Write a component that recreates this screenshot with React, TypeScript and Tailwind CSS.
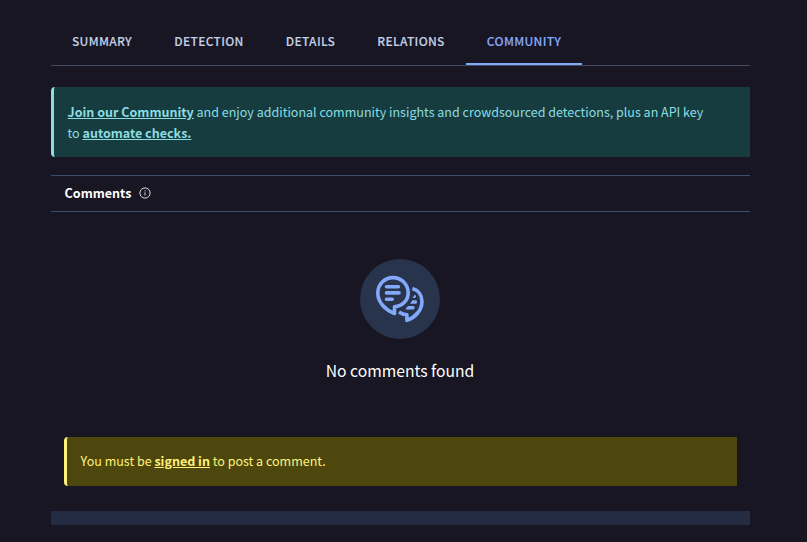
import React from "react";

const tabs = [
  { label: "SUMMARY", width: "w-[102px]" },
  { label: "DETECTION", width: "w-[112px]" },
  { label: "DETAILS", width: "w-[91px]" },
  { label: "RELATIONS", width: "w-[110px]" },
  { label: "COMMUNITY", width: "w-[116px]" },
];

function InfoIcon() {
  return (
    <svg className="ml-[8px] size-3" viewBox="0 0 12 12" fill="none" stroke="#dcdce0">
      <circle cx="6" cy="6" r="5.1" strokeWidth="1" />
      <path d="M6 5.3v3.2M6 3.3v1.1" strokeWidth="1" />
    </svg>
  );
}

function CommentsIcon() {
  return (
    <svg
      className="size-20"
      viewBox="0 0 80 80"
      fill="none"
      stroke="#84a9fb"
      strokeWidth="3.6"
      strokeLinecap="round"
      strokeLinejoin="round"
    >
      <path d="M34.5 54.5V47.8C42.7 46.8 48.2 41.3 48.2 34C48.2 25.4 41.4 18.6 33 18.6S17.8 25.4 17.8 34C17.8 43.5 25.5 51 34.5 54.5Z" />
      <path d="M26.5 27.7H38.4M26.5 33.9H39M26.5 40.3H32.2" />
      <path d="M52.4 29.6C58.4 31.3 62 36.3 62 42.4C62 51 55.4 58.4 46.9 61.4V55.8C44.2 55.6 41.4 54.7 39 53" strokeLinecap="butt" />
      <path d="M54.6 35.8C55.6 36 56 36.8 56 37.6C56 38.6 55.3 39 54.4 39H52.6Z" fill="#84a9fb" stroke="none" />
      <path d="M52.4 41.3H55.5A1.7 1.7 0 0 1 55.5 44.7H50C51 43.8 51.8 42.6 52.4 41.3ZM48.2 47H53A1.7 1.7 0 0 1 53 50.4H45.6C46.1 49 47 47.8 48.2 47Z" fill="#84a9fb" stroke="none" />
    </svg>
  );
}

export default function App() {
  return (
    <main className="h-[542px] w-full overflow-hidden bg-[#171622] pl-[51px] pr-[57px] pt-[18px] font-['Noto_Sans_CJK_SC','Noto_Sans',sans-serif] text-[12.53px] leading-[21px]">
      <nav className="flex h-12 border-b border-[#414a5e]">
        {tabs.map((tab) => (
          <button
            key={tab.label}
            className={`${tab.width} h-[47px] shrink-0 border-b-2 text-center text-[12px] font-medium tracking-[0.32px] whitespace-nowrap [-webkit-text-stroke:0.12px] ${
              tab.label === "COMMUNITY"
                ? "border-[#84a9fb] text-[#84a9fb]"
                : "border-transparent text-[#c3d0e5]"
            }`}
          >
            {tab.label}
          </button>
        ))}
      </nav>

      <section className="mt-[21px] h-[70px] rounded-l-[4px] border-l-[3px] border-[#8cdde1] bg-[#163c3f] pl-[13.6px] pr-10 pt-[14px] text-[#8cdde1]">
        <a className="font-bold underline">Join our Community</a> and enjoy additional community insights and crowdsourced detections, plus an API key
        to <a className="font-bold underline">automate checks.</a>
      </section>

      <header className="mt-[18px] flex h-[37px] items-center border-y border-[#3d4c70] pb-[2px] pl-[13.6px] font-bold text-white">
        <h2>Comments</h2>
        <InfoIcon />
      </header>

      <section className="flex h-[225px] flex-col items-center pr-px pt-[47px]">
        <div className="size-20 rounded-full bg-[#28344c]">
          <CommentsIcon />
        </div>
        <p className="mt-5 text-[15.7px] leading-6 text-white">No comments found</p>
      </section>

      <section className="ml-[13px] mr-[13px] h-[49px] rounded-l-[4px] border-l-[3px] border-[#fff27b] bg-[#4d470e] pl-[13.6px] pt-[13px] text-[#fff27b]">
        You must be <a className="font-bold underline">signed in</a> to post a comment.
      </section>

      <footer className="mt-[25px] h-[14px] bg-[#242c44]" />
    </main>
  );
}
